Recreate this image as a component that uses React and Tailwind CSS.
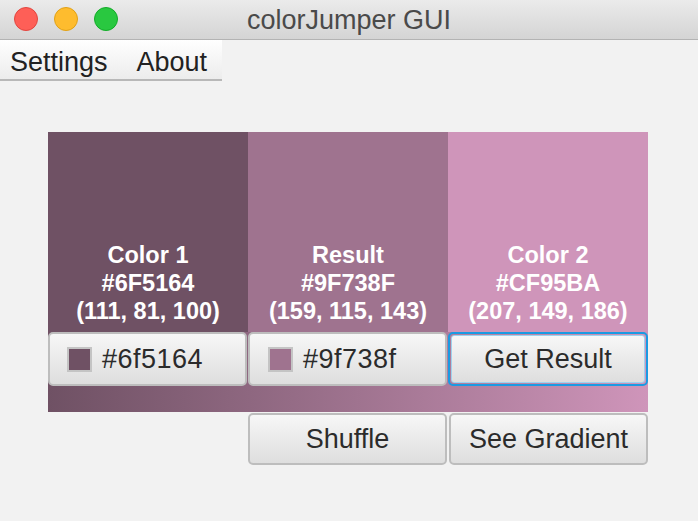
export default function App() {
  const font = { fontFamily: '"Liberation Sans", Arial, sans-serif' };

  const columns = [
    { label: 'Color 1', hex: '#6F5164', rgb: '(111, 81, 100)', bg: 'bg-[#6f5164]' },
    { label: 'Result', hex: '#9F738F', rgb: '(159, 115, 143)', bg: 'bg-[#9f738f]' },
    { label: 'Color 2', hex: '#CF95BA', rgb: '(207, 149, 186)', bg: 'bg-[#cf95ba]' },
  ];

  const btn =
    'flex items-center rounded-[5px] border-2 border-[#bdbdbd] bg-gradient-to-b from-[#f7f7f7] to-[#dedede] text-[27px] text-[#2b2b2b]';

  return (
    <div className="w-[698px] h-[521px] bg-[#f2f2f2] overflow-hidden" style={font}>
      {/* title bar */}
      <div className="relative h-[40px] bg-gradient-to-b from-[#ebebeb] to-[#d4d4d4] border-b border-[#b3b3b3] flex items-center justify-center">
        <div className="absolute left-[14px] top-[7px] flex gap-[16px]">
          <div className="w-[24px] h-[24px] rounded-full bg-[#fe5f57] border border-[#e2463f]"></div>
          <div className="w-[24px] h-[24px] rounded-full bg-[#febc2e] border border-[#e1a116]"></div>
          <div className="w-[24px] h-[24px] rounded-full bg-[#29c840] border border-[#12ac28]"></div>
        </div>
        <span className="text-[27px] text-[#4a4a4a] leading-none pt-[1px]">colorJumper GUI</span>
      </div>

      {/* menu bar */}
      <div className="w-[222px] h-[41px] bg-gradient-to-b from-[#ffffff] to-[#ececec] border-b-2 border-[#b8b8b8] flex items-center gap-[29px] pl-[10px] pt-[5px] text-[27px] text-[#222]">
        <span>Settings</span>
        <span>About</span>
      </div>

      {/* color panel */}
      <div className="ml-[48px] mt-[51px] w-[600px]">
        <div className="flex">
          {columns.map((c) => (
            <div
              key={c.label}
              className={`${c.bg} w-[200px] h-[200px] flex flex-col items-center justify-end pb-[7px] text-white font-bold text-[23.5px] leading-[28px]`}
            >
              <span>{c.label}</span>
              <span>{c.hex}</span>
              <span>{c.rgb}</span>
            </div>
          ))}
        </div>
        <div className="h-[80px] bg-gradient-to-r from-[#6f5164] to-[#cf95ba] flex items-start">
          <div className={`${btn} w-[199px] h-[54px] pl-[17px] gap-[10px]`}>
            <div className="w-[25px] h-[25px] border-2 border-[#c4c4c4] bg-[#6f5164]"></div>
            <span className="tracking-[0.5px]">#6f5164</span>
          </div>
          <div className={`${btn} w-[199px] h-[54px] ml-[1px] pl-[18px] gap-[10px]`}>
            <div className="w-[25px] h-[25px] border-2 border-[#c4c4c4] bg-[#9f738f]"></div>
            <span className="tracking-[0.5px]">#9f738f</span>
          </div>
          <div className="ml-[1px] w-[200px] h-[54px] rounded-[5px] border-2 border-[#1b9ae2] p-[1px]">
            <div className="w-full h-full rounded-[3px] border border-[#9fd2ee] bg-gradient-to-b from-[#f7f7f7] to-[#dedede] flex items-center justify-center text-[27px] text-[#2b2b2b]">
              Get Result
            </div>
          </div>
        </div>
        <div className="flex mt-[1px]">
          <div className="w-[200px]"></div>
          <div className={`${btn} w-[199px] h-[52px] justify-center`}>Shuffle</div>
          <div className={`${btn} w-[199px] h-[52px] ml-[2px] justify-center`}>See Gradient</div>
        </div>
      </div>
    </div>
  );
}
